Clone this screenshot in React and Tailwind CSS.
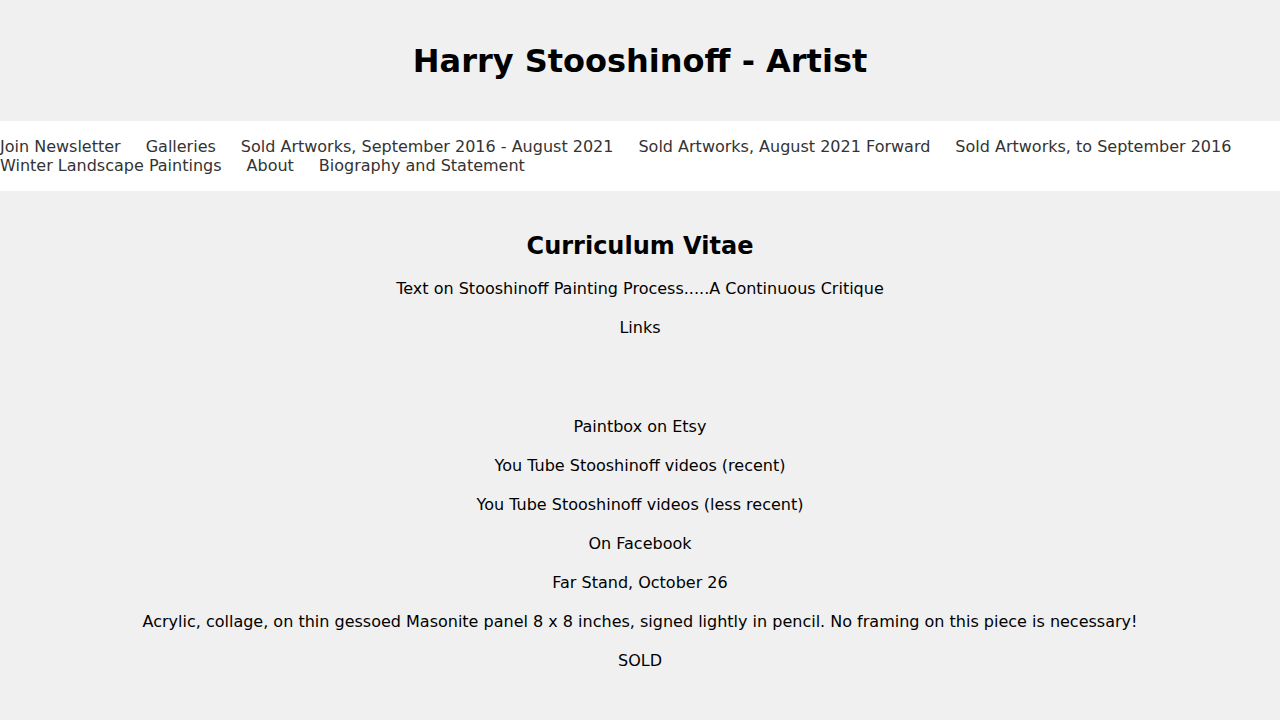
const navLinks = [
  "Join Newsletter",
  "Galleries",
  "Sold Artworks, September 2016 - August 2021",
  "Sold Artworks, August 2021 Forward",
  "Sold Artworks, to September 2016",
  "Winter Landscape Paintings",
  "About",
  "Biography and Statement",
];

const Line = ({ children }) => (
  <p className="text-[16px] leading-[23px] mb-4 text-black">{children}</p>
);

export default function App() {
  return (
    <div
      className="min-h-[720px] bg-[#f0f0f0]"
      style={{ fontFamily: '"DejaVu Sans", "Noto Sans", sans-serif' }}
    >
      {/* header */}
      <header className="h-[121px] flex items-center justify-center">
        <h1 className="text-[32px] font-bold text-black leading-[38px]">
          Harry Stooshinoff - Artist
        </h1>
      </header>

      {/* nav */}
      <nav className="bg-white py-4">
        <ul className="flex flex-wrap gap-x-[25px] text-[16px] leading-[19px] text-[#333]">
          {navLinks.map((l) => (
            <li key={l}>
              <a href="#">{l}</a>
            </li>
          ))}
        </ul>
      </nav>

      {/* content */}
      <main className="text-center pt-[41px]">
        <h2 className="text-[24px] font-bold leading-[28px] mb-[17px] text-black">
          Curriculum Vitae
        </h2>
        <Line>Text on Stooshinoff Painting Process.....A Continuous Critique</Line>
        <Line>Links</Line>
        <div className="h-[60px]" />
        <Line>Paintbox on Etsy</Line>
        <Line>You Tube Stooshinoff videos (recent)</Line>
        <Line>You Tube Stooshinoff videos (less recent)</Line>
        <Line>On Facebook</Line>
        <Line>Far Stand, October 26</Line>
        <Line>
          Acrylic, collage, on thin gessoed Masonite panel 8 x 8 inches, signed
          lightly in pencil. No framing on this piece is necessary!
        </Line>
        <Line>SOLD</Line>
      </main>
    </div>
  );
}
